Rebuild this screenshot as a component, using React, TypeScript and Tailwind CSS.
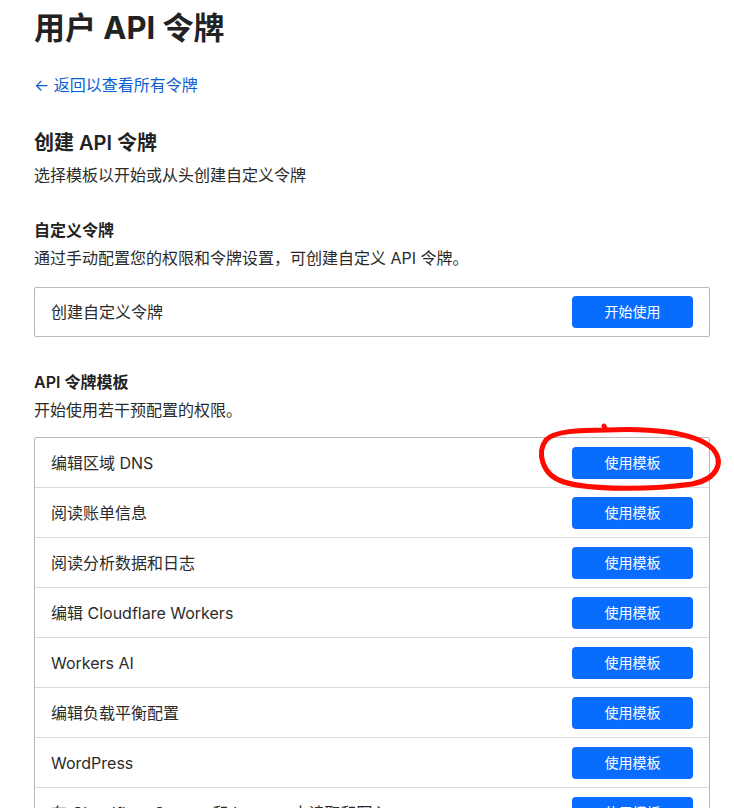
import React from 'react'

const templates = [
  '编辑区域 DNS',
  '阅读账单信息',
  '阅读分析数据和日志',
  '编辑 Cloudflare Workers',
  'Workers AI',
  '编辑负载平衡配置',
  'WordPress',
  '在 Cloudflare Stream 和 Images 中读取和写入',
]

function Button({ label }: { label: string }) {
  return (
    <button className="h-8 w-[121px] shrink-0 rounded-[4px] bg-[#086dff] text-[14px] leading-5 text-white">
      {label}
    </button>
  )
}

export default function App() {
  return (
    <div className="relative min-h-[808px] overflow-hidden bg-white pl-[34px] pr-[24px] font-['Inter','Noto_Sans_CJK_SC',sans-serif] text-[#2b2b2b]">
      <h1 className="pt-2 text-[31px] font-bold leading-10 text-[#222]">用户 API 令牌</h1>

      <a className="mt-[25px] block text-[16px] leading-6 text-[#0a5fd6]">← 返回以查看所有令牌</a>

      <h2 className="mt-8 text-[20px] font-semibold leading-7 text-[#222]">创建 API 令牌</h2>
      <p className="mt-[6px] text-[16px] leading-6">选择模板以开始或从头创建自定义令牌</p>

      <h3 className="mt-[31px] text-[16px] font-semibold leading-6 text-[#222]">自定义令牌</h3>
      <p className="mt-1 text-[16px] leading-6">通过手动配置您的权限和令牌设置，可创建自定义 API 令牌。</p>

      <div className="mt-[17px] flex h-[50px] items-center justify-between rounded-[2px] border border-[#b9b9b9] pl-4 pr-4">
        <span className="text-[16px]">创建自定义令牌</span>
        <Button label="开始使用" />
      </div>

      <h3 className="mt-[33px] text-[16px] font-semibold leading-6 text-[#222]">API 令牌模板</h3>
      <p className="mt-1 text-[16px] leading-6">开始使用若干预配置的权限。</p>

      <div className="mt-[15px] rounded-[2px] border border-[#b9b9b9]">
        {templates.map((t, i) => (
          <div
            key={t}
            className={`flex items-center justify-between pl-4 pr-4 ${i > 0 ? 'h-[50px] border-t border-[#d9d9d9]' : 'h-[49px]'}`}
          >
            <span className="text-[16px]">{t}</span>
            <Button label="使用模板" />
          </div>
        ))}
      </div>

      {/* hand-drawn highlight around the first template button */}
      <svg className="pointer-events-none absolute left-0 top-0" width="734" height="808">
        <path
          d="M606 430 C645 428 695 431 713 449 C724 462 718 479 692 484 C650 490 590 490 564 482 C541 475 537 452 546 440 C554 431 580 430 606 430 L604 426"
          fill="none"
          stroke="#ff0a00"
          strokeWidth="5"
          strokeLinecap="round"
          strokeLinejoin="round"
        />
      </svg>
    </div>
  )
}
